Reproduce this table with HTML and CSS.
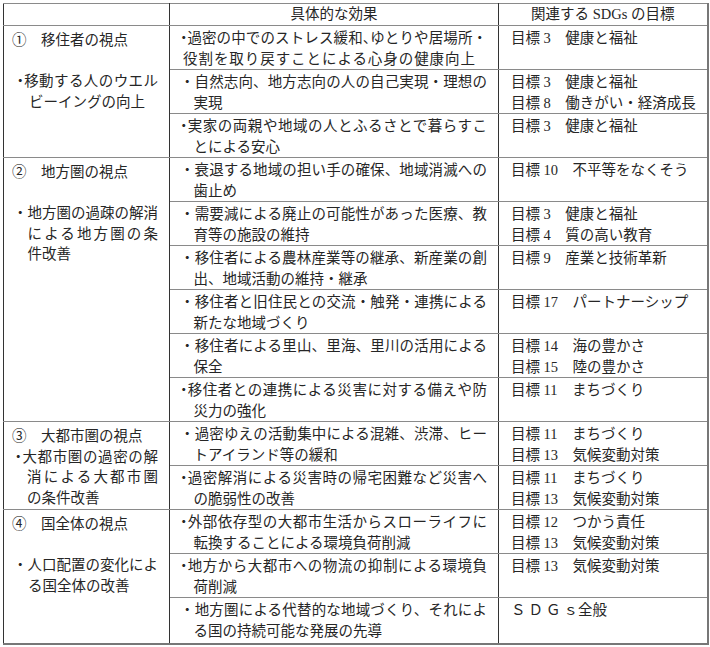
FILE: index.html
```html
<!DOCTYPE html>
<html lang="ja">
<head>
<meta charset="utf-8">
<link rel="stylesheet" href="styles.css">
</head>
<body>
<div class="page">
<table class="t">
  <colgroup><col class="c1"><col class="c2"><col class="c3"></colgroup>
  <tr class="hd">
    <th></th>
    <th>具体的な効果</th>
    <th>関連する SDGs の目標</th>
  </tr>
  <!-- Section 1 -->
  <tr>
    <td class="l" rowspan="3">
      <div>①　移住者の視点</div>
      <div class="blank"></div>
      <div class="j lb-h"><span class="hb">・</span>移動する人のウエル</div>
      <div class="lc1">ビーイングの向上</div>
    </td>
    <td class="m">
      <div class="j"><span class="hb">・</span>過密の中でのストレス緩和<span class="hc">、</span>ゆとりや居場所・</div>
      <div class="j l2a">役割を取り戻すことによる心身の健康向上</div>
    </td>
    <td class="r"><div>目標 3　健康と福祉</div></td>
  </tr>
  <tr>
    <td class="m">
      <div class="j">・自然志向、地方志向の人の自己実現・理想の</div>
      <div class="ind">実現</div>
    </td>
    <td class="r"><div>目標 3　健康と福祉</div><div>目標 8　働きがい・経済成長</div></td>
  </tr>
  <tr>
    <td class="m">
      <div class="j"><span class="hb">・</span>実家の両親や地域の人とふるさとで暮らすこ</div>
      <div class="ind">とによる安心</div>
    </td>
    <td class="r"><div>目標 3　健康と福祉</div></td>
  </tr>
  <!-- Section 2 -->
  <tr>
    <td class="l" rowspan="6">
      <div>②　地方圏の視点</div>
      <div class="blank"></div>
      <div class="lb-f">・地方圏の過疎の解消</div>
      <div class="j lc2">による地方圏の条</div>
      <div class="lc2">件改善</div>
    </td>
    <td class="m">
      <div class="j">・衰退する地域の担い手の確保、地域消滅への</div>
      <div class="ind">歯止め</div>
    </td>
    <td class="r"><div>目標 10　不平等をなくそう</div></td>
  </tr>
  <tr>
    <td class="m">
      <div class="j">・需要減による廃止の可能性があった医療、教</div>
      <div class="ind">育等の施設の維持</div>
    </td>
    <td class="r"><div>目標 3　健康と福祉</div><div>目標 4　質の高い教育</div></td>
  </tr>
  <tr>
    <td class="m">
      <div class="j">・移住者による農林産業等の継承、新産業の創</div>
      <div class="ind">出、地域活動の維持・継承</div>
    </td>
    <td class="r"><div>目標 9　産業と技術革新</div></td>
  </tr>
  <tr>
    <td class="m">
      <div class="j">・移住者と旧住民との交流・触発・連携による</div>
      <div class="ind">新たな地域づくり</div>
    </td>
    <td class="r"><div>目標 17　パートナーシップ</div></td>
  </tr>
  <tr>
    <td class="m">
      <div class="j">・移住者による里山、里海、里川の活用による</div>
      <div class="ind">保全</div>
    </td>
    <td class="r"><div>目標 14　海の豊かさ</div><div>目標 15　陸の豊かさ</div></td>
  </tr>
  <tr>
    <td class="m">
      <div class="j"><span class="hb">・</span>移住者との連携による災害に対する備えや防</div>
      <div class="ind">災力の強化</div>
    </td>
    <td class="r"><div>目標 11　まちづくり</div></td>
  </tr>
  <!-- Section 3 -->
  <tr>
    <td class="l" rowspan="2">
      <div>③　大都市圏の視点</div>
      <div class="j lb-h3"><span class="hb">・</span>大都市圏の過密の解</div>
      <div class="j lc3">消による大都市圏</div>
      <div class="lc3">の条件改善</div>
    </td>
    <td class="m">
      <div class="j">・過密ゆえの活動集中による混雑、渋滞、ヒー</div>
      <div class="ind">トアイランド等の緩和</div>
    </td>
    <td class="r"><div>目標 11　まちづくり</div><div>目標 13　気候変動対策</div></td>
  </tr>
  <tr>
    <td class="m">
      <div class="j"><span class="hb">・</span>過密解消による災害時の帰宅困難など災害へ</div>
      <div class="ind">の脆弱性の改善</div>
    </td>
    <td class="r"><div>目標 11　まちづくり</div><div>目標 13　気候変動対策</div></td>
  </tr>
  <!-- Section 4 -->
  <tr>
    <td class="l" rowspan="3">
      <div>④　国全体の視点</div>
      <div class="blank"></div>
      <div class="lb-f">・人口配置の変化によ</div>
      <div class="lc4">る国全体の改善</div>
    </td>
    <td class="m">
      <div class="j"><span class="hb">・</span>外部依存型の大都市生活からスローライフに</div>
      <div class="ind">転換することによる環境負荷削減</div>
    </td>
    <td class="r"><div>目標 12　つかう責任</div><div>目標 13　気候変動対策</div></td>
  </tr>
  <tr>
    <td class="m">
      <div class="j"><span class="hb">・</span>地方から大都市への物流の抑制による環境負</div>
      <div class="ind">荷削減</div>
    </td>
    <td class="r"><div>目標 13　気候変動対策</div></td>
  </tr>
  <tr class="last">
    <td class="m">
      <div class="j">・地方圏による代替的な地域づくり、それによ</div>
      <div class="ind">る国の持続可能な発展の先導</div>
    </td>
    <td class="r"><div><span class="sdg">ＳＤＧ</span>ｓ全般</div></td>
  </tr>
</table>
</div>
</body>
</html>
```

FILE: styles.css
```css
html, body {
  margin: 0;
  padding: 0;
  background: #ffffff;
}

body {
  font-family: "Liberation Serif", "Noto Sans CJK JP", serif;
  font-size: 14.5px;
  color: #262626;
}

.page {
  padding: 3px;
}

.t {
  border-collapse: collapse;
  table-layout: fixed;
  width: 705px;
  border-top: 1px solid #555;
  border-left: 1px solid #444;
  border-right: 2px solid #777;
  border-bottom: 2px solid #777;
}

.c1 { width: 166px; }
.c2 { width: 329px; }
.c3 { width: 209px; }

.t th,
.t td {
  border-left: 1px solid #333;
  border-right: 1px solid #333;
  border-top: 1px solid #8a8a8a;
  border-bottom: 1px solid #8a8a8a;
  vertical-align: top;
  line-height: 20.5px;
  padding: 2px 0 0 0;
}

.t th {
  font-weight: normal;
  text-align: center;
  line-height: 21px;
  padding: 0;
}

.t td.l {
  padding: 4px 11px 0 8px;
}

.t td.m {
  padding: 2px 11px 0 10px;
}

.t td.r {
  padding: 2px 0 0 12px;
  white-space: nowrap;
}

.t tr.last td {
  padding-bottom: 2px;
}

.j {
  text-align: justify;
  text-align-last: justify;
}

.blank {
  height: 20.5px;
}

/* half-width bullet / comma (compressed punctuation) */
.hb {
  letter-spacing: -0.5em;
  margin: 0 0.25em 0 -0.25em;
}

.hc {
  letter-spacing: -0.5em;
}

/* middle column continuation lines */
.ind {
  padding-left: 13.5px;
  white-space: nowrap;
}

.l2a {
  padding-left: 3px;
  padding-right: 12px;
}

/* left column lines */
.lb-h { padding-left: 4.5px; }
.lb-h3 { padding-left: 2.5px; }
.lb-f { padding-left: 1px; white-space: nowrap; }
.lc1 { padding-left: 17px; white-space: nowrap; }
.lc2 { padding-left: 15.5px; white-space: nowrap; }
.lc3 { padding-left: 15px; white-space: nowrap; }
.lc4 { padding-left: 16px; white-space: nowrap; }

.sdg {
  letter-spacing: 3px;
}
```
